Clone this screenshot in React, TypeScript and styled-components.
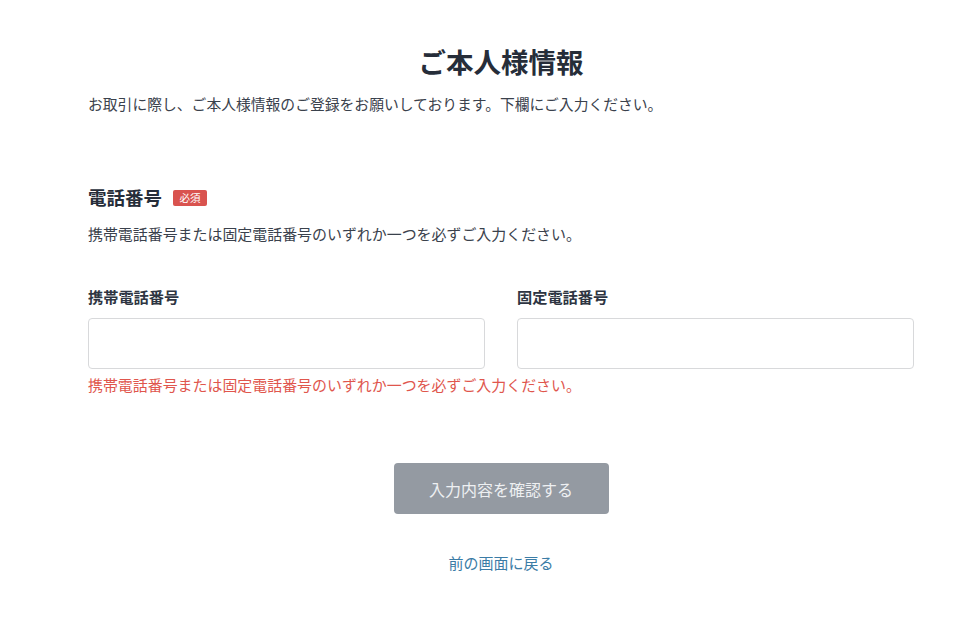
import React from "react";
import styled, { createGlobalStyle } from "styled-components";

const GlobalStyle = createGlobalStyle`
  html, body {
    margin: 0;
    padding: 0;
    background: #ffffff;
  }
  body {
    font-family: "Noto Sans CJK JP", "Noto Sans", sans-serif;
    color: #3a414c;
  }
  * { box-sizing: border-box; }
`;

const Page = styled.main`
  width: 826px;
  margin-left: 88px;
  padding-top: 41px;
  display: flex;
  flex-direction: column;
`;

const Title = styled.h1`
  margin: 0;
  text-align: center;
  font-size: 27.5px;
  line-height: 40px;
  font-weight: 700;
  color: #262d39;
`;

const Intro = styled.p`
  margin: 12px 0 0;
  font-size: 14.8px;
  line-height: 22px;
  color: #3a414c;
`;

const SectionHead = styled.div`
  margin-top: 69px;
  display: flex;
  align-items: center;
  gap: 11px;
  height: 26px;
`;

const SectionTitle = styled.h2`
  margin: 0;
  font-size: 18.5px;
  line-height: 26px;
  font-weight: 700;
  color: #262d39;
`;

const Badge = styled.span`
  display: inline-flex;
  align-items: center;
  justify-content: center;
  width: 34px;
  height: 16px;
  border-radius: 2px;
  background: #d9534f;
  color: #ffffff;
  font-size: 10.5px;
  line-height: 16px;
  margin-top: 1px;
`;

const Desc = styled.p`
  margin: 13px 0 0;
  font-size: 14.95px;
  line-height: 22px;
  color: #3a414c;
`;

const Fields = styled.div`
  margin-top: 40px;
  display: grid;
  grid-template-columns: 397px 397px;
  column-gap: 32px;
`;

const Field = styled.div`
  display: flex;
  flex-direction: column;
`;

const Label = styled.label`
  font-size: 15.2px;
  line-height: 22px;
  font-weight: 700;
  color: #2e3542;
`;

const Input = styled.input`
  margin-top: 11px;
  width: 100%;
  height: 51px;
  border: 1px solid #d8d9db;
  border-radius: 4px;
  padding: 0 12px;
  font-size: 15px;
  font-family: inherit;
  outline: none;
  background: #fff;
`;

const ErrorText = styled.p`
  margin: 5px 0 0;
  font-size: 14.95px;
  line-height: 22px;
  color: #e0564d;
  white-space: nowrap;
`;

const Actions = styled.div`
  margin-top: 67px;
  display: flex;
  flex-direction: column;
  align-items: center;
`;

const SubmitButton = styled.button`
  width: 215px;
  height: 51px;
  border: none;
  border-radius: 4px;
  background: #949aa2;
  color: #eef0f2;
  font-family: inherit;
  font-size: 16px;
  cursor: not-allowed;
`;

const BackLink = styled.a`
  margin-top: 38px;
  font-size: 15px;
  line-height: 22px;
  color: #3b7ca6;
  text-decoration: none;
`;

export default function App() {
  return (
    <>
      <GlobalStyle />
      <Page>
        <Title>ご本人様情報</Title>
        <Intro>お取引に際し、ご本人様情報のご登録をお願いしております。下欄にご入力ください。</Intro>
        <SectionHead>
          <SectionTitle>電話番号</SectionTitle>
          <Badge>必須</Badge>
        </SectionHead>
        <Desc>携帯電話番号または固定電話番号のいずれか一つを必ずご入力ください。</Desc>
        <Fields>
          <Field>
            <Label>携帯電話番号</Label>
            <Input type="tel" />
            <ErrorText>携帯電話番号または固定電話番号のいずれか一つを必ずご入力ください。</ErrorText>
          </Field>
          <Field>
            <Label>固定電話番号</Label>
            <Input type="tel" />
          </Field>
        </Fields>
        <Actions>
          <SubmitButton disabled>入力内容を確認する</SubmitButton>
          <BackLink href="#">前の画面に戻る</BackLink>
        </Actions>
      </Page>
    </>
  );
}
